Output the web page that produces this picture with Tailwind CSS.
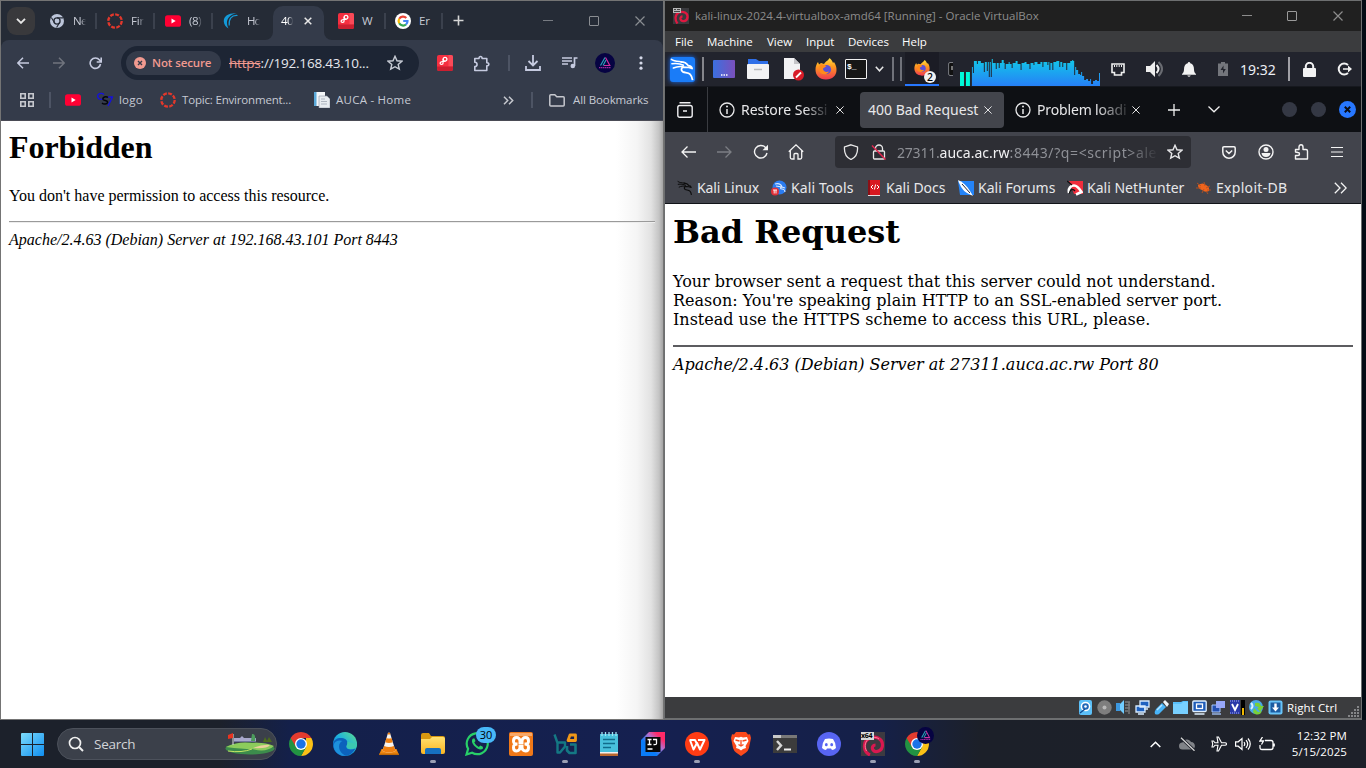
<!DOCTYPE html>
<html lang="en">
<head>
<meta charset="utf-8">
<title>Desktop</title>
<script src="https://cdn.jsdelivr.net/npm/@tailwindcss/browser@4"></script>
</head>
<body class="w-[1366px] h-[768px] overflow-hidden bg-[#030b14] relative">
<svg class="absolute w-0 h-0">
 <defs>
  <linearGradient id="gw" x1="0" y1="0" x2="1" y2="1"><stop offset="0" stop-color="#7ddcfb"/><stop offset="1" stop-color="#0f8ef0"/></linearGradient>
  <linearGradient id="gg" x1="0" y1="0" x2="0" y2="1"><stop offset="0" stop-color="#12c8e8"/><stop offset="1" stop-color="#2878f8"/></linearGradient>
  <linearGradient id="ge" x1="0" y1="1" x2="1" y2="0"><stop offset="0" stop-color="#0b58b8"/><stop offset=".5" stop-color="#1cb0e0"/><stop offset="1" stop-color="#5fe08a"/></linearGradient>
  <linearGradient id="gp" x1="0" y1="0" x2="1" y2="0"><stop offset="0" stop-color="#3b70e0"/><stop offset="1" stop-color="#7a50bc"/></linearGradient>
  <linearGradient id="gf" x1="0" y1="0" x2="0" y2="1"><stop offset="0" stop-color="#ffe070"/><stop offset="1" stop-color="#fbb520"/></linearGradient>
  <linearGradient id="gx" x1="0" y1="0" x2="0" y2="1"><stop offset="0" stop-color="#ffe040"/><stop offset=".4" stop-color="#ff9a20"/><stop offset="1" stop-color="#f03a50"/></linearGradient>
  <linearGradient id="gj" x1="0" y1="1" x2="1" y2="0"><stop offset=".35" stop-color="#0a7cf8"/><stop offset=".6" stop-color="#b070d0"/><stop offset=".8" stop-color="#ff2a68"/></linearGradient>
  <symbol id="ring" viewBox="0 0 16 16"><circle cx="8" cy="8" r="6.7" fill="none" stroke="#e2382c" stroke-width="2.3" stroke-dasharray="3.86 1.4"/></symbol>
  <symbol id="yt" viewBox="0 0 16 16"><rect y="2.2" width="16" height="11.6" rx="2.6" fill="#ff0033"/><path d="M6.5 5.6v4.8L10.7 8z" fill="#fff"/></symbol>
  <symbol id="red" viewBox="0 0 16 16"><rect width="16" height="16" rx="2" fill="#f62f40"/><path d="M11.5 0H14a2 2 0 0 1 2 2v9.5h-4.5z" fill="#fb4a58"/><path d="M0 11.5h16V14a2 2 0 0 1-2 2H2a2 2 0 0 1-2-2z" fill="#cc1f30"/><circle cx="8" cy="4.300" r="1.900" fill="none" stroke="#fff" stroke-width="1.300"/><path d="M6.200 4v3.500q0 2-1.700 2-1.600-.2-1.300-1.700.4-1.300 2.300-1.200L8.500 6.200" fill="none" stroke="#fff" stroke-width="1.200"/></symbol>
  <symbol id="chrome" viewBox="0 0 24 24"><path d="M24 12A12 12 0 0 1 12 24l5-9V6h5.390A12 12 0 0 1 24 12z" fill="#fbc116"/><path d="M1.610 6A12 12 0 0 0 12 24l5.200-9L12 12z" fill="#229342"/><path d="M1.610 6A12 12 0 0 1 22.390 6H12L7 15z" fill="#e33b2e"/><circle cx="12" cy="12" r="6" fill="#fff"/><circle cx="12" cy="12" r="4.700" fill="#1a73e8"/></symbol>
  <symbol id="star" viewBox="0 0 16 16"><path d="m8 1.300 2 4.500 4.900.4-3.700 3.200 1.100 4.800L8 11.700l-4.300 2.500 1.100-4.800L1.100 6.200 6 5.800z" fill="none" stroke="currentColor" stroke-width="1.400"/></symbol>
  <symbol id="x" viewBox="0 0 10 10"><path d="m.5.5 9 9m0-9-9 9" stroke="currentColor" fill="none" stroke-width="1.200"/></symbol>
  <symbol id="info" viewBox="0 0 16 16"><circle cx="8" cy="8" r="7" fill="none" stroke="currentColor" stroke-width="1.300"/><path d="M8 7v5" stroke="currentColor" stroke-width="1.500"/><circle cx="8" cy="4.600" r="1" fill="currentColor"/></symbol>
  <symbol id="dragon" viewBox="0 0 26 26"><path d="M1.500 2.500C4 4.500 8 4.500 12 5M2 7c4-.5 8-.5 12 1.500M3.500 11.500c3-1.500 6.500-2 10-1.500" fill="none" stroke="currentColor" stroke-width="1.600" stroke-linecap="round"/><path d="M11 5c4 0 6.500 1.500 8 4 2 0 3.500 1 4 3-2.500-1.500-6-1.500-9-1.500-2.500.5-3 3.500-.5 5 2 1 5.500.5 7.500 2.500 1.500 1.500 2 3.500 2.500 6" fill="none" stroke="currentColor" stroke-width="1.900" stroke-linejoin="round"/></symbol>
  <symbol id="fox" viewBox="0 0 22 22"><path d="M11 21.500C4 21.500.5 17 .5 11.500c0-3 1-5.500 2.500-7.500l1 2.500 2-1.500 3 1C11 3 14 2 14.500 0c2 1.500 3 3.500 3.500 5l1-1c2 3 2.500 5.500 2.500 8 0 5.500-4 9.500-10.500 9.500z" fill="url(#gx)"/><circle cx="11.500" cy="11.500" r="4.600" fill="#5a50d8"/><path d="M5 6.500c2-.5 5 0 6.500 2-2 .3-2 1.500-3.500 2 0 3 3 4 6 3-2 4-9 4-10-1.500z" fill="#ff8a1c"/></symbol>
  <symbol id="logoA" viewBox="0 0 20 20"><circle cx="10" cy="10" r="10" fill="#060342"/><path d="M10 4.500 5.500 12.500M8 12.500l3-5.500" stroke="#28a0b8" stroke-width="1.200" fill="none"/><path d="m10.500 4.500 4.300 8h-6" fill="none" stroke="#d030a0" stroke-width="1.200"/><path d="M4 14.700h12" stroke="#9a2aa0" stroke-width="1.300" stroke-dasharray="1.500 .5"/></symbol>
 </defs>
</svg>

<!-- Chrome window -->
<section class="absolute left-0 top-0 w-[664px] h-[720px] border-t border-l border-r border-b border-[#747474] bg-white flex flex-col font-['Open_Sans',sans-serif] text-[11.5px] text-[#c6cad4] whitespace-nowrap">
 <div class="h-[39px] bg-[#252b36] flex items-center shrink-0">
  <div class="ml-[6px] mr-[15px] w-7 h-7 rounded-[9px] bg-[#39393c] flex items-center justify-center"><svg class="w-[10px] h-[6px]" viewBox="0 0 10 6"><path d="m1 .8 4 4 4-4" fill="none" stroke="#e6e6e6" stroke-width="1.900"/></svg></div>
  <svg class="w-[14px] h-[14px] mr-[9px]" viewBox="0 0 16 16"><circle cx="8" cy="8" r="8" fill="#bcc5da"/><circle cx="8" cy="8" r="3.500" fill="none" stroke="#252b36" stroke-width="1.500"/><path d="M8 4.500h7M5 9.800 1.500 4M11 9.800 7.500 15.500" stroke="#252b36" stroke-width="1.300"/></svg>
  <div class="w-[13px] mr-[9px] tracking-[-0.700px] [mask-image:linear-gradient(to_right,black_60%,transparent)]">Ne</div>
  <div class="w-[2px] h-4 bg-[#3b414d] mr-[10px]"></div>
  <svg class="w-4 h-4 mr-2"><use href="#ring"/></svg>
  <div class="w-[13px] mr-[9px] tracking-[-0.200px] [mask-image:linear-gradient(to_right,black_60%,transparent)]">Fir</div>
  <div class="w-[2px] h-4 bg-[#3b414d] mr-[10px]"></div>
  <svg class="w-4 h-4 mr-2"><use href="#yt"/></svg>
  <div class="w-[13px] mr-[9px] tracking-[-0.400px] [mask-image:linear-gradient(to_right,black_65%,transparent)]">(8)</div>
  <div class="w-[2px] h-4 bg-[#3b414d] mr-[10px]"></div>
  <svg class="w-4 h-4 mr-2" viewBox="0 0 16 16"><path d="M13.500.3C6-.3.5 3 .8 8.500 1 12 3 14 5.500 15.500 1.500 8 5.500 2 13.500.3z" fill="#149ad8"/><path d="M14.500 2.500C8.500 2 5.500 6 6.200 12.500" stroke="#149ad8" stroke-width="1.200" fill="none"/></svg>
  <div class="w-[13px] tracking-[-1px] [mask-image:linear-gradient(to_right,black_60%,transparent)]">Ho</div>
  <div class="relative ml-[13px] w-[51px] h-[34px] mt-[5px] rounded-t-[10px] bg-[#343b4a] flex items-center pb-[5px] text-white">
   <svg class="absolute -left-2 bottom-0 w-2 h-2" viewBox="0 0 8 8"><path d="M8 0v8H0a8 8 0 0 0 8-8" fill="#343b4a"/></svg>
   <svg class="absolute -right-2 bottom-0 w-2 h-2" viewBox="0 0 8 8"><path d="M0 0v8h8a8 8 0 0 1-8-8" fill="#343b4a"/></svg>
   <div class="ml-2 w-[12px] tracking-[-0.600px] [mask-image:linear-gradient(to_right,black_60%,transparent)]">40</div>
   <svg class="w-2 h-2 ml-[11px]" viewBox="0 0 8 8"><path d="m.7.7 6.600 6.600m0-6.600L.7 7.300" stroke="#e8e8e8" stroke-width="1.500"/></svg>
  </div>
  <svg class="w-4 h-4 ml-[14px] mr-2"><use href="#red"/></svg>
  <div class="w-[12px] mr-[10px]">W</div>
  <div class="w-[2px] h-4 bg-[#3b414d] mr-[9px]"></div>
  <svg class="w-4 h-4 mr-2" viewBox="0 0 16 16"><circle cx="8" cy="8" r="8" fill="#fff"/><g fill="none" stroke-width="2.200"><path d="M4.200 5.800A4.500 4.500 0 0 1 11.300 5" stroke="#ea4335"/><path d="M4.200 5.800a4.500 4.500 0 0 0 0 4.400" stroke="#fbbc05"/><path d="M4.200 10.200a4.500 4.500 0 0 0 6.800 1.300" stroke="#34a853"/><path d="M11 11.500A4.500 4.500 0 0 0 12.500 8H8.200" stroke="#4285f4"/></g></svg>
  <div class="w-[12px] mr-[10px] tracking-[-0.200px]">Er</div>
  <div class="w-[2px] h-4 bg-[#3b414d] mr-[10px]"></div>
  <svg class="w-[11px] h-[11px] mr-[79px]" viewBox="0 0 11 11"><path d="M5.500.5v10M.5 5.500h10" stroke="#d6d6d6" stroke-width="1.600"/></svg>
  <svg class="w-[10px] h-[10px] mr-9 text-[#777b82]" viewBox="0 0 10 10"><path d="M0 4.500h10" stroke="currentColor"/></svg>
  <div class="w-[10px] h-[10px] mr-9 border border-[#8a8d92] rounded-[1px]"></div>
  <svg class="w-[10px] h-[10px] text-[#8a8d92]"><use href="#x"/></svg>
 </div>
 <div class="bg-[#252b36]"><div class="h-[81px] bg-[#343b4a] rounded-t-[8px] flex flex-col border-b border-[#4a4b55]">
  <div class="h-[46px] flex items-center shrink-0">
   <svg class="w-3 h-3 ml-4 mr-6" viewBox="0 0 12 12"><path d="M12 6H1M6 .8.8 6 6 11.200" fill="none" stroke="#c6cbe0" stroke-width="1.500"/></svg>
   <svg class="w-3 h-3 mr-6" viewBox="0 0 12 12"><path d="M0 6h11M6 .8 11.200 6 6 11.200" fill="none" stroke="#70747e" stroke-width="1.500"/></svg>
   <svg class="w-[13px] h-[13px] mr-[19px]" viewBox="0 0 13 13"><path d="M11.500 7A5.200 5.200 0 1 1 10.500 3l1.500 1.500M12.200.5v4.500H7.700" fill="none" stroke="#c6cbe0" stroke-width="1.600"/></svg>
   <div class="w-[298px] h-[34px] rounded-full bg-[#1d2534] flex items-center pl-[5px]">
    <div class="w-[95px] h-6 rounded-full bg-[#343b4a] flex items-center pl-2"><svg class="w-3 h-3 mr-[6px]" viewBox="0 0 12 12"><circle cx="6" cy="6" r="6" fill="#f19a90"/><path d="m4 4 4 4m0-4L4 8" stroke="#343b4a" stroke-width="1.400"/></svg><span class="text-[#f19a90] font-semibold text-[11.500px] tracking-[-0.100px]">Not secure</span></div>
    <span class="ml-2 w-[158px] text-[13.500px] text-[#e6e8ee] tracking-[-0.200px]"><span class="text-[#f19a90] line-through">https</span>://192.168.43.10...</span>
    <svg class="w-4 h-4 text-[#c9cdd6]"><use href="#star"/></svg>
   </div>
   <svg class="w-4 h-4 ml-[18px] mr-[20px]"><use href="#red"/></svg>
   <svg class="w-[17px] h-[17px] mr-[18px]" viewBox="0 0 17 17"><path d="M1.800 3.500h4.200C5.800.8 9.300.8 9.100 3.500h4.700v4.200c2.700-.1 2.700 3.300 0 3.200v4.600h-12v-4c3-.2 3-4 0-4.200z" fill="none" stroke="#c6cbe0" stroke-width="1.600" stroke-linejoin="round"/></svg>
   <div class="w-[2px] h-4 bg-[#4d5464] mr-[15px]"></div>
   <svg class="w-4 h-4 mr-[21px]" viewBox="0 0 16 16"><path d="M8 0v10M3.500 6 8 10.500 12.500 6M1 11v4h14v-4" fill="none" stroke="#c6cbe0" stroke-width="1.800"/></svg>
   <svg class="w-4 h-4 mr-[17px]" viewBox="0 0 16 16"><path d="M0 3h10M0 6h10M0 9h6" stroke="#c6cbe0" stroke-width="1.500"/><path d="M12.500 11V3h3" fill="none" stroke="#c6cbe0" stroke-width="1.700"/><circle cx="10.800" cy="11" r="2.300" fill="#c6cbe0"/></svg>
   <svg class="w-5 h-5 mr-[24px]"><use href="#logoA"/></svg>
   <svg class="w-[4px] h-[14px]" viewBox="0 0 4 14" fill="#d6daea"><circle cx="2" cy="1.800" r="1.600"/><circle cx="2" cy="7" r="1.600"/><circle cx="2" cy="12.200" r="1.600"/></svg>
  </div>
  <div class="h-[28px] flex items-center">
   <svg class="w-[14px] h-[14px] ml-[19px] mr-[15px]" viewBox="0 0 14 14" fill="none" stroke="#c6c8ce" stroke-width="1.600"><path d="M.8.8h4.400v4.400H.8zM8.800.8h4.400v4.400H8.800zM.8 8.800h4.400v4.400H.8zM8.800 8.800h4.400v4.400H8.800z"/></svg>
   <div class="w-[2px] h-4 bg-[#4d5464] mr-[14px]"></div>
   <svg class="w-4 h-4 mr-4"><use href="#yt"/></svg>
   <svg class="w-4 h-4 mr-[6px]" viewBox="0 0 16 16" fill="none" stroke-width="1.300"><path d="M7 2.500C4 0 0 2 .8 5s4 3 6 1M11 5h4.500L11 14" stroke="#1410e0"/><path d="M11 5.500c-2-1.500-5.500-.5-5 1.700.5 1.800 5 .8 4.500 3.300-.5 2-4 2-5.500.5" stroke="#05060c" stroke-width="1.500"/></svg>
   <span class="w-[41px] tracking-[0.200px]">logo</span>
   <svg class="w-4 h-4 mr-[6px]"><use href="#ring"/></svg>
   <span class="w-[131px] tracking-[-0.180px]">Topic: Environment...</span>
   <svg class="w-[17px] h-4 mr-[6px]" viewBox="0 0 17 16"><path d="M1 0h11v14H1z" fill="#f4f6f8"/><path d="M1 0h2.500v14H1z" fill="#5aa8d8"/><path d="M6 4h8l3 3v9H6z" fill="#e8ecf0" stroke="#8f98a4" stroke-width=".6"/><path d="M8 7h4M8 9.500h6M8 12h6" stroke="#a0a8b4" stroke-width=".8"/></svg>
   <span class="w-[167px] tracking-[0.250px]">AUCA - Home</span>
   <svg class="w-[11px] h-[9px] mr-[17px]" viewBox="0 0 11 9"><path d="m1 .8 3.700 3.700L1 8.200M6 .8l3.700 3.700L6 8.200" fill="none" stroke="#c6c8ce" stroke-width="1.500"/></svg>
   <div class="w-[2px] h-4 bg-[#4d5464] mr-4"></div>
   <svg class="w-4 h-[13px] mr-2" viewBox="0 0 16 13"><path d="M.8 11V1.800q0-1 1-1h4l2 2h6.400q1 0 1 1V11q0 1-1 1H1.800q-1 0-1-1z" fill="none" stroke="#c6c8ce" stroke-width="1.500"/></svg>
   <span class="tracking-[-0.100px]">All Bookmarks</span>
  </div>
 </div></div>
 <div class="flex-1 text-black font-['Liberation_Serif',serif] text-[16px] pl-2 pr-2 bg-[linear-gradient(to_right,#fff_0,#fff_615px,#f5f5f5_636px,#e2e2e2_650px,#c4c4c4_658px,#a4a4a4_662px)]">
  <h1 class="text-[32px] leading-[37px] font-bold pt-[8px] tracking-[-0.060px]">Forbidden</h1>
  <p class="leading-[18px] mt-[21px]">You don't have permission to access this resource.</p>
  <hr class="mt-4 border-0 h-[2px] bg-[linear-gradient(#9a9a9a_50%,#ededed_50%)]">
  <address class="leading-[18px] mt-[8px]">Apache/2.4.63 (Debian) Server at 192.168.43.101 Port 8443</address>
 </div>
</section>

<!-- VirtualBox window -->
<section class="absolute left-[664px] top-0 w-[698px] h-[720px] border border-b-2 border-[#6d6f70] bg-white flex flex-col whitespace-nowrap font-['Noto_Sans',sans-serif] text-[#e8e8ea]">
 <div class="h-[30px] bg-[#202020] flex items-center shrink-0 font-['Open_Sans',sans-serif] text-[11.500px] text-[#8c8c8c]">
  <svg class="w-4 h-4 ml-2 mr-[6px]" viewBox="0 0 16 16"><rect width="16" height="16" fill="#3a3a3e"/><path d="M4.500 15.500C1.500 12 2 6 6 4.500c4-1.500 9 0 8.500 5-.5 4-6 5-7 1.500-.3-1.500.7-2.500 2-2.500" fill="none" stroke="#e01840" stroke-width="2.300"/><rect width="8" height="5" fill="#b8b8b8"/><path d="M1 1.500h2M4 1.500h3M1 3.500h6" stroke="#444"/></svg>
  <span class="flex-1">kali-linux-2024.4-virtualbox-amd64 [Running] - Oracle VirtualBox</span>
  <svg class="w-[10px] h-[10px] mr-[35px]" viewBox="0 0 10 10"><path d="M0 4.500h10" stroke="#8c8c8c"/></svg>
  <div class="w-[10px] h-[10px] mr-9 border border-[#9a9a9a] rounded-[1px]"></div>
  <svg class="w-[10px] h-[10px] mr-[18px] text-[#8c8c8c]"><use href="#x"/></svg>
 </div>
 <div class="h-[21px] bg-[#3b3c3e] flex items-center shrink-0 font-['Open_Sans',sans-serif] text-[11.500px] text-white pl-[10px]">
  <span class="w-[32px]">File</span><span class="w-[60px]">Machine</span><span class="w-[39px]">View</span><span class="w-[42px]">Input</span><span class="w-[54px]">Devices</span><span>Help</span>
 </div>
 <!-- Kali panel -->
 <div class="h-[35px] bg-[#22242d] border-b border-[#16181e] flex items-center shrink-0">
  <div class="w-[25px] h-[25px] ml-[5px] mr-[7px] rounded-[3px] bg-[#1a7cf8] shadow-[0_0_5px_#1a6cf0] text-white"><svg class="w-[25px] h-[25px]"><use href="#dragon"/></svg></div>
  <div class="w-[2px] h-6 bg-[#85868c] mr-[9px]"></div>
  <svg class="w-[22px] h-[18px] mr-3" viewBox="0 0 22 18"><rect width="22" height="18" rx="1" fill="url(#gp)"/><path d="M8 15h1.500M10.500 15H12M13 15h1.500" stroke="#fff" stroke-width="1.300"/></svg>
  <svg class="w-[22px] h-5 mr-[14px]" viewBox="0 0 22 20"><path d="M1 0h8l3 2h9v6H1z" fill="#2f6fe8"/><rect y="5" width="22" height="15" rx="1" fill="#f2f2f4"/><path d="M7 10.500h8" stroke="#b8b8bc" stroke-width="1.500"/></svg>
  <svg class="w-[22px] h-[23px] mr-[10px]" viewBox="0 0 22 23"><path d="M1 0h10l6 6v15H1z" fill="#f2f2f4"/><path d="M11 0v6h6z" fill="#c4c4c8"/><circle cx="15.500" cy="17" r="5.500" fill="#d81c28"/><path d="m13 19.500 5-5" stroke="#fff" stroke-width="1.800"/></svg>
  <svg class="w-[22px] h-[22px] mr-[8px]"><use href="#fox"/></svg>
  <div class="w-[22px] h-[20px] mr-2 border border-[#f0f0f0] bg-[#161616] rounded-[1px] font-['Liberation_Mono',monospace] font-bold text-[8px] leading-[13px] text-white pl-[1px]">$_</div>
  <svg class="w-[9px] h-[6px] mr-[8px]" viewBox="0 0 9 6"><path d="m.8.8 3.700 4 3.700-4" fill="none" stroke="#e8e8e8" stroke-width="1.500"/></svg>
  <div class="w-[2px] h-6 bg-[#70727a] mr-[6px]"></div>
  <div class="w-[2px] h-6 bg-[#70727a] mr-[3px]"></div>
  <div class="relative w-[34px] h-[34px] border-b-2 border-[#2777ff] bg-[#1b1c25] flex items-center justify-center"><svg class="w-4 h-4 mb-px"><use href="#fox"/></svg><span class="absolute right-[3px] bottom-[1px] w-[12px] h-[12px] rounded-full bg-[#f2f2f2] text-black text-[10.500px] leading-[12px] text-center font-medium">2</span></div>
  <svg class="w-[5px] h-[14px] ml-[9px] mr-[7px]" viewBox="0 0 5 14"><path d="M5 .5H2Q.6.500.6 2v10q0 1.500 1.400 1.500h3" fill="#111" stroke="#7a7c82"/><path d="M4 4v4" stroke="#ddd"/></svg>
  <svg class="w-[140px] h-[34px] mr-[11px]" viewBox="0 0 141 34"><path d="M0 20h4v14H0zM6 20h4v14H6z" fill="#00f8d8"/><path d="M12 34V15h1v6h1V9h3v3h1v-3h3v2h3v9h1V10h2v9h1V10h1v15h1V10h1v15h1V7h1v4h3v6h1v-6h2v5h1v-5h2v-3h2v3h1v6h1v-5h3v-2h1v2h2v4h1v-5h3v-2h2v3h3v6h1v-7h3v-1h2v2h3v5h1v-6h3v2h1v-3h3v2h3v-2h2v5h1v-5h4v3h1v-3h1v8h1v-7h2v7h1v-8h3v-1h3v6h1v-5h2v5h1v-4h3v7h1v-7h3v-2h2v-1h1v1h1v14h1v-8h1v3h2v4h2v1h1v-3h1v4h2v4h2v-1h2v2h2v-2h1v5h2v-3h2v-1h2v1h2v-8h1v16z" fill="url(#gg)"/></svg>
  <svg class="w-[14px] h-[13px] mr-[21px]" viewBox="0 0 14 13"><path d="M1 1h12v8.500h-2.500V12h-7V9.500H1z" fill="none" stroke="#eee" stroke-width="1.600"/><path d="M3.500 2v2M5.800 2v2M8.200 2v2M10.500 2v2" stroke="#eee"/></svg>
  <svg class="w-[18px] h-4 mr-[18px]" viewBox="0 0 18 16"><path d="M0 5h4l5-5v16l-5-5H0z" fill="#eee"/><path d="M10.500 4q4 4 0 8" fill="none" stroke="#eee" stroke-width="2"/><path d="M12.500 1q7 7 0 14" fill="none" stroke="#6a6c72" stroke-width="2"/></svg>
  <svg class="w-[14px] h-[15px] mr-[22px]" viewBox="0 0 14 15"><path d="M7 0a1.500 1.500 0 0 1 1.300 1.200C11 2 12 4 12 7.500c0 2 .8 3.500 2 4.500v.8H0V12c1.200-1 2-2.500 2-4.500C2 4 3 2 5.700 1.200A1.500 1.500 0 0 1 7 0zM5.200 13.500h3.600Q7 16 5.200 13.500z" fill="#f2f2f2"/></svg>
  <svg class="w-[10px] h-[14px] mr-[12px]" viewBox="0 0 10 14"><path d="M3 0h4v1.500h3V14H0V1.500h3z" fill="#74767c"/><path d="M5.500 3.500 2.500 8H5v3.500L7.800 7H5.500z" fill="#22242d"/></svg>
  <span class="w-[48px] text-[14px] text-[#eceef4]">19:32</span>
  <div class="w-[2px] h-6 bg-[#a0a0a6] mr-[13px]"></div>
  <svg class="w-[13px] h-[15px] mr-[21px]" viewBox="0 0 13 15"><path d="M2.800 7V4.500a3.700 3.700 0 0 1 7.400 0V7" fill="none" stroke="#f2f2f2" stroke-width="2"/><rect y="6" width="13" height="9" rx="1" fill="#f2f2f2"/></svg>
  <svg class="w-[15px] h-[14px]" viewBox="0 0 15 14"><path d="M11 3A5.500 5.500 0 1 0 11 11" fill="none" stroke="#f2f2f2" stroke-width="2"/><path d="M6 6.200h5V3.500L15 7l-4 3.500V7.800H6z" fill="#f2f2f2"/></svg>
 </div>
 <!-- Firefox tabs -->
 <div class="h-[45px] bg-[#0e1014] flex items-center shrink-0 text-[14px]">
  <svg class="w-4 h-4 ml-3 mr-[14px]" viewBox="0 0 16 16" fill="none" stroke="#f0f0f2" stroke-width="1.400"><path d="M2.500.7h11M.8 5.500q0-2 2-2h10.400q2 0 2 2v7.700q0 2-2 2H2.800q-2 0-2-2zM6 9h4"/></svg>
  <div class="w-px h-[45px] bg-[#3a3c41] mr-[11px]"></div>
  <svg class="w-4 h-4 mr-[6px]"><use href="#info"/></svg>
  <span class="w-[90px] mr-[5px] [mask-image:linear-gradient(to_right,black_70%,transparent)]">Restore Sessi</span>
  <svg class="w-2 h-2 mr-[16px] text-[#eee]"><use href="#x"/></svg>
  <div class="w-[144px] h-9 rounded-[4px] bg-[#43454c] flex items-center pl-2 mr-[11px]"><span class="w-[116px]">400 Bad Request</span><svg class="w-2 h-2"><use href="#x"/></svg></div>
  <svg class="w-4 h-4 mr-[6px]"><use href="#info"/></svg>
  <span class="w-[91px] mr-[4px] tracking-[-0.150px] [mask-image:linear-gradient(to_right,black_65%,transparent_105%)]">Problem loadi</span>
  <svg class="w-2 h-2 mr-[28px] text-[#eee]"><use href="#x"/></svg>
  <svg class="w-3 h-3 mr-[28px]" viewBox="0 0 12 12"><path d="M6 0v12M0 6h12" stroke="#f0f0f0" stroke-width="1.300"/></svg>
  <svg class="w-3 h-[7px] mr-[62px]" viewBox="0 0 12 7"><path d="m.5.5 5.500 5.300L11.500.5" fill="none" stroke="#f0f0f0" stroke-width="1.300"/></svg>
  <div class="w-[15px] h-[15px] rounded-full bg-[#343844] mr-[14px]"></div>
  <div class="w-[15px] h-[15px] rounded-full bg-[#343844] mr-[13px]"></div>
  <div class="w-[17px] h-[17px] rounded-full bg-[#2777ff] flex items-center justify-center"><svg class="w-[7px] h-[7px]" viewBox="0 0 7 7"><path d="m.8.8 5.400 5.400m0-5.400L.8 6.200" stroke="#0b0d14" stroke-width="2"/></svg></div>
 </div>
 <!-- Firefox toolbars -->
 <div class="h-[72px] bg-[#42444c] border-b border-[#111318] flex flex-col shrink-0 text-[14px]">
  <div class="h-10 flex items-center">
   <svg class="w-[15px] h-3 ml-4 mr-[21px]" viewBox="0 0 15 12"><path d="M15 6H1M6.500.5 1 6l5.500 5.500" fill="none" stroke="#f4f4f4" stroke-width="1.300"/></svg>
   <svg class="w-[15px] h-3 mr-[21px]" viewBox="0 0 15 12"><path d="M0 6h14M8.500.5 14 6l-5.500 5.500" fill="none" stroke="#7c7e84" stroke-width="1.300"/></svg>
   <svg class="w-4 h-4 mr-[19px]" viewBox="0 0 16 16"><path d="M14 9A6.300 6.300 0 1 1 12.500 3.500l2 1.800" fill="none" stroke="#f4f4f4" stroke-width="1.400"/><path d="M15 .8v5.400H9.500z" fill="#f4f4f4"/></svg>
   <svg class="w-4 h-4 mr-[31px]" viewBox="0 0 16 16"><path d="M.8 7.800 8 .9l7.200 6.900M2.300 6.500v7q0 1.500 1.500 1.500H6v-4.500q0-1 1-1h2q1 0 1 1V15h2.200q1.500 0 1.500-1.500v-7" fill="none" stroke="#f4f4f4" stroke-width="1.300"/></svg>
   <div class="w-[356px] h-8 rounded-[4px] bg-[#2d2e34] flex items-center pl-2 mr-[31px]">
    <svg class="w-4 h-4 mr-[12px]" viewBox="0 0 16 16"><path d="M8 .8 14.500 3c.5 6-1 10-6.500 12.500C2.500 13 1 9 1.500 3z" fill="none" stroke="#e8e8e8" stroke-width="1.300"/></svg>
    <svg class="w-4 h-4 mr-[10px]" viewBox="0 0 16 16"><path d="M4.500 7V4.500a3.500 3.500 0 0 1 7 0V7M3.500 7h9q1 0 1 1v6q0 1-1 1h-9q-1 0-1-1V8q0-1 1-1z" fill="none" stroke="#e8e8e8" stroke-width="1.300"/><path d="m1 1.500 13.500 14" stroke="#e22850" stroke-width="1.500"/></svg>
    <span class="w-[262px] mr-[8px] overflow-hidden text-[#8e9096] [mask-image:linear-gradient(to_right,black_88%,transparent)]"><span class="tracking-[-0.200px]">27311.</span><span class="text-[#f0f0f2]">auca.ac.rw</span><span class="tracking-[0.600px]">:8443/?q=&lt;script&gt;ale</span></span>
    <svg class="w-4 h-4"><use href="#star"/></svg>
   </div>
   <svg class="w-[14px] h-[13px] mr-[22px]" viewBox="0 0 14 13"><path d="M2 .8h10q1.200 0 1.200 1.200v4a6.200 6.200 0 0 1-12.400 0V2Q.8.800 2 .8zM3.800 4.500 7 7.500l3.200-3" fill="none" stroke="#f4f4f4" stroke-width="1.500"/></svg>
   <svg class="w-4 h-4 mr-[20px]" viewBox="0 0 16 16"><circle cx="8" cy="8" r="7" fill="none" stroke="#f4f4f4" stroke-width="1.400"/><circle cx="8" cy="5.500" r="2.500" fill="#f4f4f4"/><path d="M3.500 9h9q-.5 4-4.500 4T3.500 9z" fill="#f4f4f4"/></svg>
   <svg class="w-4 h-4 mr-[21px]" viewBox="0 0 16 16"><path d="M1.500 8V5.500H5V3c0-3 4-3 4 0v2.500h3q1.500 0 1.500 1.500v8h-12v-3.500H4c2 0 2-3 0-3z" fill="none" stroke="#f4f4f4" stroke-width="1.400" stroke-linejoin="round"/></svg>
   <svg class="w-3 h-3" viewBox="0 0 12 12"><path d="M0 1.500h12M0 6h12M0 10.500h12" stroke="#f4f4f4" stroke-width="1.200"/></svg>
  </div>
  <div class="h-[31px] flex items-center">
   <svg class="w-4 h-4 ml-3 mr-1 text-[#0c0c0c]"><use href="#dragon"/></svg><span class="w-[74px] tracking-[-0.100px]">Kali Linux</span>
   <svg class="w-4 h-4 mr-1" viewBox="0 0 16 16"><circle cx="8.500" cy="7.500" r="7" fill="#2a7cf0"/><path d="M4 4c4-1 6 0 7 3-2 0-2 2 0 2s3 2 3 3M5 6l6 1 3 1" fill="none" stroke="#d8e8ff" stroke-width="1.100"/><circle cx="4" cy="11.500" r="4" fill="#e03038"/><path d="M2 10h4M3.200 10v3.500M5 10v3.500" stroke="#fff" stroke-width=".9"/></svg><span class="w-[75px] tracking-[0.100px]">Kali Tools</span>
   <svg class="w-4 h-4 mr-1" viewBox="0 0 16 16"><path d="M2 0h12v15H2z" fill="#d81820"/><path d="M2 0h2v15H2z" fill="#8c1016"/><path d="M2 15h12v1H2z" fill="#e8e0e0"/><path d="m7 5-2 2 2 2m4-4 2 2-2 2M9.600 4.500 8.400 9.500" stroke="#fff" fill="none"/></svg><span class="w-[72px]">Kali Docs</span>
   <svg class="w-4 h-4 mr-1" viewBox="0 0 16 16"><path d="M0 1h16v14H2z" fill="#2484f8"/><path d="M0 0c5 2 9 6 12 11l3 5-6-3C5 11 2 6 0 0z" fill="#fff"/><path d="m4 4 8 9" stroke="#223"/></svg><span class="w-[89px]">Kali Forums</span>
   <svg class="w-4 h-4 mr-1" viewBox="0 0 16 16"><path d="M2 1h14v13H7z" fill="#f02c3c"/><path d="M2 13C1 8 4 5.500 7 5.500s5 2.500 7.500 6.500L9 14.500" fill="none" stroke="#fff" stroke-width="2.600"/><path d="m0 1 5 4M2.500 13.500C3 9 6 8.500 8 11" stroke="#111" stroke-width="1.300" fill="none"/></svg><span class="w-[109px]">Kali NetHunter</span>
   <svg class="w-4 h-4 mr-1" viewBox="0 0 16 16"><path d="M2 5q5-3 8 0 4 2 3 6-4 2-7-1-4-1-4-5z" fill="#f0641c"/><path d="m1 3 4 3M0 8h5M8 2l1 4M14 6l-4 2M15 10h-4M6 13l2-4M12 14l-2-3" stroke="#b85020" stroke-width=".9"/></svg><span class="w-[118px] tracking-[0.300px]">Exploit-DB</span>
   <svg class="w-[13px] h-3" viewBox="0 0 13 12"><path d="m.8.8 5.200 5.200-5.200 5.200M7 .8 12.200 6 7 11.200" fill="none" stroke="#f4f4f4" stroke-width="1.300"/></svg>
  </div>
 </div>
 <div class="flex-1 text-black font-['DejaVu_Serif',serif] text-[16px] leading-[19px] px-2">
  <h1 class="text-[32px] leading-[38px] font-bold pt-[8px] mt-px">Bad Request</h1>
  <p class="mt-[21px]">Your browser sent a request that this server could not understand.<br>Reason: You're speaking plain HTTP to an SSL-enabled server port.<br>Instead use the HTTPS scheme to access this URL, please.</p>
  <hr class="mt-4 border-0 h-[2px] bg-[#5c5c60]">
  <address class="mt-2">Apache/2.4.63 (Debian) Server at 27311.auca.ac.rw Port 80</address>
 </div>
 <!-- VM status bar -->
 <div class="h-[21px] bg-[#3b3c3e] flex items-center justify-end shrink-0 gap-[4px] font-['Open_Sans',sans-serif] text-[11.500px] text-white">
  <svg class="w-[15px] h-[15px]" viewBox="0 0 15 15"><rect x="1" width="13" height="15" rx="2" fill="#5cc0f8"/><circle cx="7.500" cy="6.500" r="4.800" fill="#fff"/><circle cx="7.500" cy="6.500" r="3.300" fill="#2068b8"/><circle cx="7.500" cy="6.500" r="1.300" fill="#fff"/><path d="m2 13 5-4" stroke="#124a90" stroke-width="1.500"/></svg>
  <svg class="w-[15px] h-[15px]" viewBox="0 0 15 15"><circle cx="7.500" cy="7.500" r="7.200" fill="#7e7e7e"/><circle cx="7.500" cy="7.500" r="2" fill="#b8b8b8"/></svg>
  <svg class="w-[15px] h-[15px]" viewBox="0 0 15 15"><path d="M0 3h4v8H0z" fill="#3c98e0"/><path d="M4 4l4-4v14l-4-4z" fill="#70ccff"/><path d="M9 2h5M9 5h5M9 8h5M9 11h3M13 2v12" stroke="#7a7b7e" stroke-width="1.500" fill="none"/></svg>
  <svg class="w-[15px] h-[15px]" viewBox="0 0 15 15"><path d="M5 1h9v6H5zM1 6h9v6H1z" fill="#1f62c0" stroke="#d8ecff" stroke-width="1.300"/><path d="M3 14h6M9 9h4" stroke="#d8ecff" stroke-width="1.300"/></svg>
  <svg class="w-[15px] h-[15px]" viewBox="0 0 15 15"><path d="m8 3 4 4-7 7q-2 1-4 0-1-2 1-5z" fill="#48b4f8"/><path d="m9 2 2-2 4 4-2 3z" fill="#f0f4f8"/><path d="m3 10 5-5" stroke="#b8e4ff" stroke-width="1.500"/></svg>
  <svg class="w-[15px] h-[15px]" viewBox="0 0 15 15"><path d="M0 2h8l2-1h5v13H0z" fill="#58c0fc"/><path d="M0 4h8l2-2h5v12H0z" fill="#78d0ff"/></svg>
  <svg class="w-[15px] h-[15px]" viewBox="0 0 15 15"><rect x=".8" y="1" width="13.400" height="10.500" rx="1" fill="#1f5cb8" stroke="#e0f0ff" stroke-width="1.300"/><rect x="4.500" y="4" width="6" height="4.500" fill="none" stroke="#fff" stroke-width="1.300"/><path d="M2.500 14h10" stroke="#e0f0ff" stroke-width="1.500"/></svg>
  <svg class="w-[15px] h-[15px]" viewBox="0 0 15 15"><path d="M1 5h8v7H1z" fill="#2450b0" stroke="#a8c8ff"/><path d="M5 1h9v7H5z" fill="#98a8f8"/><path d="M1 14h9" stroke="#a8c8ff" stroke-width="1.300"/></svg>
  <svg class="w-[15px] h-[15px]" viewBox="0 0 15 15"><rect width="10" height="14" fill="#2838a8"/><path d="M0 1h10M0 13h10" stroke="#a8b0f0" stroke-dasharray="1 1"/><path d="m2 4 3 6 3-6" fill="none" stroke="#fff" stroke-width="1.800"/><path d="M11 0h4v15h-4z" fill="#000"/><path d="M12 8h2v7h-2z" fill="#f0b800"/></svg>
  <svg class="w-[15px] h-[15px]" viewBox="0 0 15 15"><circle cx="7" cy="7" r="7" fill="#48a8e8"/><path d="M6 3q4-1 5 1l1 2h3l-4 6-3-4h2q-1-2-4-2zM5 8l3 3q1 2 5 0-2 5-7 3l-2-2z" fill="#78d038"/><path d="M2 3q3 3 0 6" stroke="#d8f0ff" stroke-width="2" fill="none"/></svg>
  <svg class="w-[15px] h-[15px]" viewBox="0 0 15 15"><rect x=".5" y=".5" width="14" height="14" rx="2" fill="#68c4f8"/><rect x="2.500" y="2.500" width="10" height="10" fill="#1c5ca0"/><path d="M6.300 3.500h2.400v4H11l-3.500 4L4 7.500h2.300z" fill="#fff"/></svg>
  <span class="w-[57px] tracking-[0.100px]">Right Ctrl</span>
  <svg class="w-3 h-3 mr-px mt-2" viewBox="0 0 12 12" fill="#858688"><path d="M9 0h2v2H9zM6 3h2v2H6zM9 3h2v2H9zM3 6h2v2H3zM6 6h2v2H6zM9 6h2v2H9zM0 9h2v2H0zM3 9h2v2H3zM6 9h2v2H6zM9 9h2v2H9z"/></svg>
 </div>
</section>

<!-- Taskbar -->
<footer class="absolute left-0 top-[720px] w-[1366px] h-12 flex items-center font-['Open_Sans',sans-serif] whitespace-nowrap text-white bg-[linear-gradient(to_right,#1c212b_0,#1c212b_220px,#14204a_290px,#152050_650px,#152048_880px,#1c2029_980px,#1d2029_100%)]">
 <svg class="w-[23px] h-[23px] ml-[21px] mr-[13px]" viewBox="0 0 23 23" fill="url(#gw)"><path d="M0 1q0-1 1-1h10v11H0zM12 0h10q1 0 1 1v10H12zM0 12h11v11H1q-1 0-1-1zM12 12h11v10q0 1-1 1H12z"/></svg>
 <div class="w-[220px] h-8 rounded-full bg-[#3b404a] border border-[#4c515b] flex items-center pl-[10px] mr-3">
  <svg class="w-4 h-4 mr-[10px]" viewBox="0 0 16 16"><circle cx="7" cy="7" r="5.500" fill="none" stroke="#f0f0f0" stroke-width="1.700"/><path d="m11 11 4 4" stroke="#f0f0f0" stroke-width="1.900"/></svg>
  <span class="w-[131px] text-[13.500px] tracking-[-0.250px] text-[#d2d4d8]">Search</span>
  <svg class="w-[50px] h-[22px]" viewBox="0 0 50 22"><ellipse cx="25" cy="15.500" rx="24.500" ry="6" fill="#3c8c4c"/><path d="M1 14q12-6 26-4 12-1 22 3-8 7-22 3-10 0-26-2z" fill="#8ccc5c"/><path d="M28 15q10-4 17-3-3 4-17 3z" fill="#ecd09c"/><path d="M3 18q14 2 24-2" stroke="#c4e464" fill="none"/><path d="M9 5h6l2-2 2 2h12v4H9z" fill="#a8a8cc"/><path d="M9 8.500h22" stroke="#70749c"/><path d="M27 1q4-1 3 7h-4z" fill="#4c9c5c"/><path d="M38 9l2-5 2 4 2-4 3 5z" fill="#4c6c1c"/><path d="M8 1v11" stroke="#ddd"/><path d="m8 0-5 2v4l5-1z" fill="#e83420"/></svg>
 </div>
 <div class="flex gap-5">
  <svg class="w-6 h-6"><use href="#chrome"/></svg>
  <svg class="w-6 h-6" viewBox="0 0 24 24"><circle cx="12" cy="12" r="12" fill="url(#ge)"/><path d="M0 12C1 7 5 5.500 9 6c4 .5 6 3 5.500 6-.3 1.500-1.500 2-1 3.500.8 2.500 5.500 2.500 9 .8C20 22 15 24 11 24 4 23.500 0 18 0 12z" fill="#0c62bc"/><path d="M9.500 9C4 11 5 21 13 23.800 5 24.500-.5 18 1 12c1-3 5-4.500 8.500-3z" fill="#1d90dc"/><path d="M14 9.500c1 2-.5 3.500-.5 5 .3 2.500 4 3.500 9.500 1.500l1.500-4z" fill="#3cc8b0"/></svg>
  <svg class="w-6 h-6" viewBox="0 0 24 24"><path d="m4.500 17-2.500 6h20l-2.500-6z" fill="#f08810"/><path d="M11 1q1-1 2 0l5.500 18q-6.500 3-13 0z" fill="#f8f4f0"/><path d="m9.500 6-1.300 4.300q3.800 1.500 7.600 0L14.500 6q-2.500 1-5 0zM7 14l-1.500 5q6.500 3 13 0L17 14q-5 2-10 0zM11 1q1-1 2 0l.5 1.500h-3z" fill="#f08010"/><path d="M2 22.300h20" stroke="#c06808" stroke-width="1.500"/></svg>
  <div class="relative w-6 h-6"><svg class="w-6 h-6" viewBox="0 0 24 24"><path d="M0 3q0-2 2-2h6l2 3h12q2 0 2 2v6H0z" fill="#d89810"/><path d="M0 7h9l2-2h11q2 0 2 2v13q0 2-2 2H2q-2 0-2-2z" fill="url(#gf)"/><path d="M4 22v-4q0-2 2-2h12q2 0 2 2v4z" fill="#1670c0"/></svg><i class="absolute left-[9px] top-[28px] w-[6px] h-[3px] rounded-full bg-[#9aa0b4]"></i></div>
  <div class="relative w-6 h-6"><svg class="w-6 h-6" viewBox="0 0 24 24"><path d="m1.500 22.500 1.600-5.700a10.500 10.500 0 1 1 4 4z" fill="none" stroke="#28d068" stroke-width="2.200"/><path d="M8 6.500c-2 2-1 5 2 8s6 4 8 2l-.2-1.800-2.500-1.200-1.500 1.400q-3-1-4.500-4.300L10.500 9 9.500 6.500z" fill="#28d068"/></svg><span class="absolute left-[11px] -top-[5px] w-5 h-4 rounded-full bg-[#48b8f8] text-black text-[11px] leading-4 text-center">30</span></div>
  <svg class="w-6 h-6" viewBox="0 0 24 24"><rect width="24" height="24" rx="2" fill="#f07818"/><path d="M1 1h22v3H1z" fill="#f8a868"/><g fill="none" stroke="#fff" stroke-width="3"><path d="M8.500 12C5 12 4.500 11 4.500 9s1-3.500 3-3.500S11 7 11 9v1.500h2V9c0-2 1.500-3.500 3.500-3.500s3 1.500 3 3.500-.5 3-4 3c3.500 0 4 1.500 4 3.500s-1 3.500-3 3.500-3.500-1.500-3.500-3.500V14h-2v1.500c0 2-1.500 3.500-3.500 3.500s-3-1.500-3-3.500.5-3.500 4-3.500z"/></g></svg>
  <div class="relative w-6 h-6"><svg class="w-6 h-6" viewBox="0 0 24 24" fill="none" stroke-linejoin="round"><path d="M1.500 2.500 4.500 11v9.500h2.500L12 14.500v-4H5" stroke="#147884" stroke-width="2.400"/><path d="M14 14v4.500l2.500 2.500h6v-8.500H17" stroke="#147884" stroke-width="2.600"/><path d="M15 8.500 17 3h5.500v5.500z" stroke="#f09818" stroke-width="2.800"/></svg><i class="absolute left-[9px] top-[28px] w-[6px] h-[3px] rounded-full bg-[#9aa0b4]"></i></div>
  <svg class="w-6 h-6" viewBox="0 0 24 24"><path d="M3 2h18v21H3z" fill="#48c0dc"/><path d="M3 21h18v3H3z" fill="#b86830"/><path d="M3 20h18v1.500H3z" fill="#f0f0f0"/><path d="M5 0v4M8.500 0v4M12 0v4M15.500 0v4M19 0v4" stroke="#a0e4f4" stroke-width="1.300"/><path d="M6 7.500h12M6 11.500h12M6 15.500h8" stroke="#106c8c" stroke-width="1.600"/></svg>
  <svg class="w-6 h-6" viewBox="0 0 24 24"><path d="M0 8 8 0h16v16l-8 8H0z" fill="url(#gj)"/><path d="M4.500 5h15v15h-15z" fill="#080808"/><path d="M6.500 7.500h4M8.500 7.500v5M6.500 12.500h4M12 7.500h3.500v4q0 1.500-3 1M6.500 17h5" stroke="#fff" stroke-width="1.300" fill="none"/></svg>
  <div class="relative w-6 h-6"><svg class="w-6 h-6" viewBox="0 0 24 24"><circle cx="12" cy="12" r="12" fill="#ff3c14"/><path d="M4.500 8H10l2.500 5M5 8l3.500 9.500L12 11l3 6.500L19.500 8H13" fill="none" stroke="#fff" stroke-width="2" stroke-linejoin="round"/></svg><i class="absolute left-[9px] top-[28px] w-[6px] h-[3px] rounded-full bg-[#9aa0b4]"></i></div>
  <svg class="w-6 h-6" viewBox="0 0 24 24"><path d="m7 0h10l2 2.500 2-.3L22 6l-2 10q-1 3-3 4.500L12 24l-5-3.500Q5 19 4 16L2 6l1-3.800 2 .3z" fill="#fb4a1c"/><path d="m6 5 4 .5 2-.8 2 .8 4-.5 1.500 4-3 5 .5 2-3 1-2 1.500L10 17l-3-1 .5-2-3-5z" fill="#fff"/><path d="m6.500 8 4 1M17.500 8l-4 1M12 8v5M9.500 12.500 12 14l2.500-1.500" stroke="#fb4a1c" stroke-width="1.300" fill="none"/></svg>
  <svg class="w-6 h-6" viewBox="0 0 24 24"><path d="M0 3h24v18H0z" fill="#3c3c3c"/><path d="M0 3h24v3H0z" fill="#787878"/><path d="M0 3h8v3H0z" fill="#c8c8c8"/><path d="m4 9 4 4.500L4 18" fill="none" stroke="#d8d8d8" stroke-width="2.400"/><path d="M11 17.500h7" stroke="#f0f0f0" stroke-width="2"/></svg>
  <svg class="w-6 h-6" viewBox="0 0 24 24"><circle cx="12" cy="12" r="12" fill="#5865f2"/><path d="M8 7q4-1 8 0 3 4 3 9-2 2-4 2l-1-1.500h-4L9 18q-2 0-4-2 0-5 3-9z" fill="#fff"/><ellipse cx="9.300" cy="12.700" rx="1.400" ry="1.600" fill="#5865f2"/><ellipse cx="14.700" cy="12.700" rx="1.400" ry="1.600" fill="#5865f2"/></svg>
  <div class="relative w-6 h-6"><svg class="w-6 h-6" viewBox="0 0 24 24"><path d="M0 0h24v24H0z" fill="#3c3a40"/><path d="M9 23C2 20 1.500 10 8 6.500c6-3 13.500-.5 13.500 6.500 0 6-7 8.500-9.500 5-1.500-2.500 0-5 2.500-5" fill="none" stroke="#d81850" stroke-width="3.200"/><path d="M5.500 19C3 14 4 9 8.500 6.500 12 5 16 5 18 7" fill="none" stroke="#f88098"/></svg><span class="absolute left-0 top-0 w-[13px] h-[8px] bg-[#d8d8d8] text-black font-bold text-[7px] leading-[8px] tracking-[-0.300px]">x64</span><i class="absolute left-[9px] top-[28px] w-[6px] h-[3px] rounded-full bg-[#9aa0b4]"></i></div>
  <div class="relative w-6 h-6"><svg class="w-6 h-6"><use href="#chrome"/></svg><svg class="absolute left-3 -top-[5px] w-[17px] h-[17px]"><use href="#logoA"/></svg><i class="absolute left-[9px] top-[28px] w-[6px] h-[3px] rounded-full bg-[#9aa0b4]"></i></div>
 </div>
 <svg class="w-[11px] h-[7px] ml-auto mr-[18px]" viewBox="0 0 11 7"><path d="m.7 6 4.800-4.800L10.300 6" fill="none" stroke="#fff" stroke-width="1.500"/></svg>
 <svg class="w-4 h-[14px] mr-4" viewBox="0 0 16 14"><path d="M3.500 12.500a3.500 3.500 0 0 1 0-7c1.500-4 7-4 8.500-.5 5 0 5 7.500 1 7.500z" fill="#808388"/><path d="m1.500.5 14 13" stroke="#1d2029" stroke-width="3"/><path d="m2 .8 13.500 13" stroke="#d8d8d8" stroke-width="1.200"/></svg>
 <svg class="w-4 h-4 mr-2" viewBox="0 0 16 16"><path d="M15.500 8q0-1.200-1.500-1.200h-3.500L7.500 1H6l1 5.800H4L2.500 5H1l.7 3L1 11h1.500L4 9.200h3L6 15h1.500l3-5.800H14q1.500 0 1.500-1.200z" fill="none" stroke="#fff" stroke-width="1.100"/></svg>
 <svg class="w-4 h-[14px] mr-2" viewBox="0 0 16 14" fill="none" stroke="#fff" stroke-width="1.200"><path d="M.6 4.800h2.600L7 1.500v11L3.200 9.200H.6zM9 5q1.500 2 0 4M11 3.200q3.300 3.800 0 7.600M13 1.500q4.500 5.500 0 11"/></svg>
 <svg class="w-4 h-[14px] mr-[16px]" viewBox="0 0 16 14" fill="none" stroke="#fff" stroke-width="1.300"><path d="M6 3.500h6q2 0 2 2v5q0 2-2 2H3q-2 0-2-2V8M15.200 6.500v3M3.500 0 1 4h3.500L2.500 7.500"/></svg>
 <div class="text-[11.500px] leading-4 text-right mr-[19px] w-[56px] flex flex-col items-end tracking-[0.080px]"><span>12:32 PM</span><span>5/15/2025</span></div>
</footer>
</body>
</html>
